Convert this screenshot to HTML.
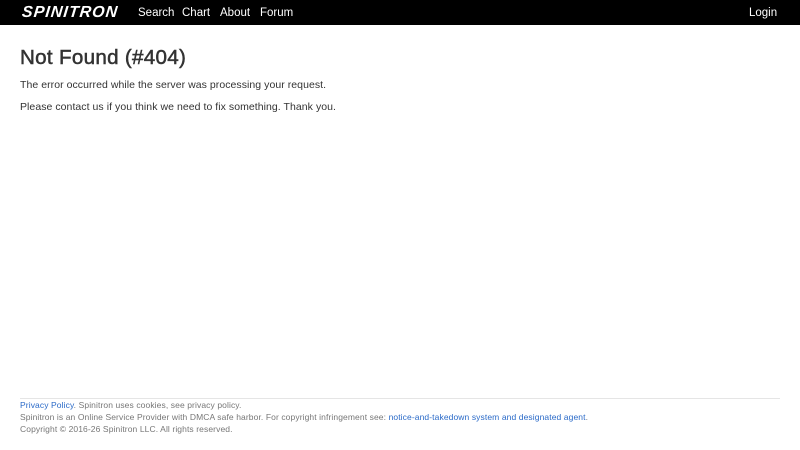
<!DOCTYPE html>
<html><head><meta charset="utf-8"><style>
*{margin:0;padding:0;box-sizing:border-box}
html,body{width:800px;height:450px;background:#fff;overflow:hidden;font-family:"Liberation Sans",Arial,sans-serif;color:#333}
.nav{position:absolute;left:0;top:0;width:800px;height:25px;background:#000;}
.logo{position:absolute;left:22px;top:3px;color:#fff;font-weight:bold;font-style:italic;font-size:16px;letter-spacing:1px;line-height:19px;transform:skewX(-6deg)}
.nav a{position:absolute;top:6px;color:#fff;font-size:11.5px;line-height:14px;text-decoration:none}
h1{position:absolute;left:20px;top:45px;font-size:20.6px;font-weight:normal;color:#333;line-height:26px;letter-spacing:0.3px;-webkit-text-stroke:0.5px #333}
p{position:absolute;left:20px;font-size:10.5px;line-height:14px;color:#333;letter-spacing:0.05px}
.hr{position:absolute;left:20px;top:398px;width:760px;height:1px;background:#e5e5e5}
.f{position:absolute;left:20px;font-size:8.5px;line-height:12px;color:#777;letter-spacing:0.1px}
.f a{color:#2a6ac8;text-decoration:none}
</style></head><body>
<div class="nav">
<div class="logo">SPINITRON</div>
<a style="left:138px">Search</a>
<a style="left:182px">Chart</a>
<a style="left:220px">About</a>
<a style="left:260px">Forum</a>
<a style="left:749px">Login</a>
</div>
<h1>Not Found (#404)</h1>
<p style="top:78px">The error occurred while the server was processing your request.</p>
<p style="top:100px">Please contact us if you think we need to fix something. Thank you.</p>
<div class="hr"></div>
<div class="f" style="top:399px"><a>Privacy Policy</a>. Spinitron uses cookies, see privacy policy.</div>
<div class="f" style="top:411px">Spinitron is an Online Service Provider with DMCA safe harbor. For copyright infringement see: <a>notice-and-takedown system and designated agent</a>.</div>
<div class="f" style="top:423px">Copyright © 2016-26 Spinitron LLC. All rights reserved.</div>
</body></html>
